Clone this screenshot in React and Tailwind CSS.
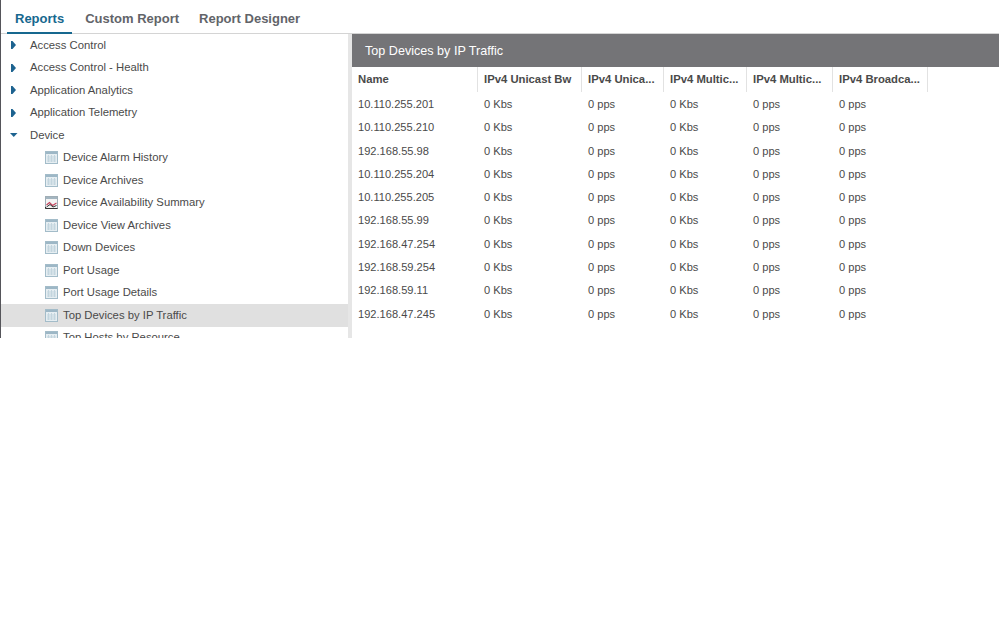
import React from 'react';

const collapsed = ['Access Control', 'Access Control - Health', 'Application Analytics', 'Application Telemetry'];

const deviceReports = [
  'Device Alarm History',
  'Device Archives',
  'Device Availability Summary',
  'Device View Archives',
  'Down Devices',
  'Port Usage',
  'Port Usage Details',
  'Top Devices by IP Traffic',
  'Top Hosts by Resource',
];

const ips = [
  '10.110.255.201',
  '10.110.255.210',
  '192.168.55.98',
  '10.110.255.204',
  '10.110.255.205',
  '192.168.55.99',
  '192.168.47.254',
  '192.168.59.254',
  '192.168.59.11',
  '192.168.47.245',
];

const columns = ['Name', 'IPv4 Unicast Bw', 'IPv4 Unica...', 'IPv4 Multic...', 'IPv4 Multic...', 'IPv4 Broadca...'];
const gridCols = 'grid grid-cols-[126px_104px_82px_83px_86px_95px]';

function ReportIcon() {
  return (
    <svg width="13" height="13" viewBox="0 0 13 13" className="shrink-0">
      <rect x="0.5" y="0.5" width="12" height="12" fill="#e6eef2" stroke="#a3bcc9" />
      <rect x="1" y="1" width="11" height="2" fill="#9db7c6" />
      <path d="M3.5 4v7M6.5 4v7M9.5 4v7M2 6h9M2 8h9M2 10h9" stroke="#c3d5de" strokeWidth="1" fill="none" />
    </svg>
  );
}

function ChartIcon() {
  return (
    <svg width="13" height="13" viewBox="0 0 13 13" className="shrink-0">
      <rect x="0.5" y="0.5" width="12" height="12" fill="#f4f4f4" stroke="#a0aeb6" />
      <rect x="1" y="1" width="11" height="2" fill="#a3b5c0" />
      <path d="M0.5 11V12.5H12.5" stroke="#333" fill="none" />
      <path d="M1.5 9L4.5 6.5L7.5 9.5L11.5 7" stroke="#c2415b" strokeWidth="1.1" fill="none" />
      <path d="M1.5 11L5 8.5L8 11L11.5 9.5" stroke="#333" strokeWidth="1" fill="none" />
    </svg>
  );
}

function Caret({ open }) {
  return (
    <svg width="12" height="12" viewBox="0 0 12 12" className="shrink-0">
      {open ? <path d="M1 4H8.5L4.75 8Z" fill="#1d6390" /> : <path d="M2 2V10H3.5L7 6L3.5 2Z" fill="#1d6390" />}
    </svg>
  );
}

function TreeRow({ open, children }) {
  return (
    <div className="flex h-[22.5px] items-center pl-2 text-[#4a4a4a]">
      <Caret open={open} />
      <span className="ml-[9px] whitespace-nowrap">{children}</span>
    </div>
  );
}

function ReportRow({ name, active }) {
  return (
    <div className={`flex h-[22.5px] shrink-0 items-center pl-[44px] text-[#4a4a4a] ${active ? 'bg-[#e0e0e0]' : ''}`}>
      {name === 'Device Availability Summary' ? <ChartIcon /> : <ReportIcon />}
      <span className="ml-[5px] whitespace-nowrap">{name}</span>
    </div>
  );
}

export default function App() {
  return (
    <div className="h-[624px] w-[999px] overflow-hidden bg-white font-['Liberation_Sans',Arial,sans-serif] text-[11.3px]">
      <div className="flex h-[338px] flex-col border-l border-[#55555a]">
        {/* tabs */}
        <div className="flex h-[34px] shrink-0 items-stretch border-b border-[#d4d4d4] pl-[6px] text-[13px] font-bold">
          <div className="-mb-px flex items-center border-b-2 border-[#17688f] px-2 pt-[5px] text-[#17688f]">Reports</div>
          <div className="ml-[13px] flex items-center pt-[5px] text-[#626469]">Custom Report</div>
          <div className="ml-[20px] flex items-center pt-[5px] text-[#626469]">Report Designer</div>
        </div>

        <div className="flex min-h-0 flex-1">
          {/* tree */}
          <div className="w-[347px] shrink-0 overflow-hidden">
            {collapsed.map((name) => (
              <TreeRow key={name}>{name}</TreeRow>
            ))}
            <TreeRow open>Device</TreeRow>
            {deviceReports.map((name) => (
              <ReportRow key={name} name={name} active={name === 'Top Devices by IP Traffic'} />
            ))}
          </div>

          {/* splitter */}
          <div className="w-[4px] shrink-0 bg-[#e6e6e6]" />

          {/* report */}
          <div className="min-w-0 flex-1">
            <div className="flex h-[33px] items-center bg-[#747477] pl-[13px] pt-0.5 text-[12.6px] text-white">Top Devices by IP Traffic</div>
            <div className={`${gridCols} h-[25px] font-bold text-[#4a4a4a]`}>
              {columns.map((col, i) => (
                <div key={i} className="flex items-center border-r border-[#e2e2e2] pl-[6px] whitespace-nowrap">
                  {col}
                </div>
              ))}
            </div>
            <div className="pt-[0.5px] text-[11.1px]">
              {ips.map((ip) => (
                <div key={ip} className={`${gridCols} h-[23.33px] items-center text-[#4a4a4a]`}>
                  <div className="pl-[6px]">{ip}</div>
                  <div className="pl-[6px]">0 Kbs</div>
                  <div className="pl-[6px]">0 pps</div>
                  <div className="pl-[6px]">0 Kbs</div>
                  <div className="pl-[6px]">0 pps</div>
                  <div className="pl-[6px]">0 pps</div>
                </div>
              ))}
            </div>
          </div>
        </div>
      </div>
    </div>
  );
}
